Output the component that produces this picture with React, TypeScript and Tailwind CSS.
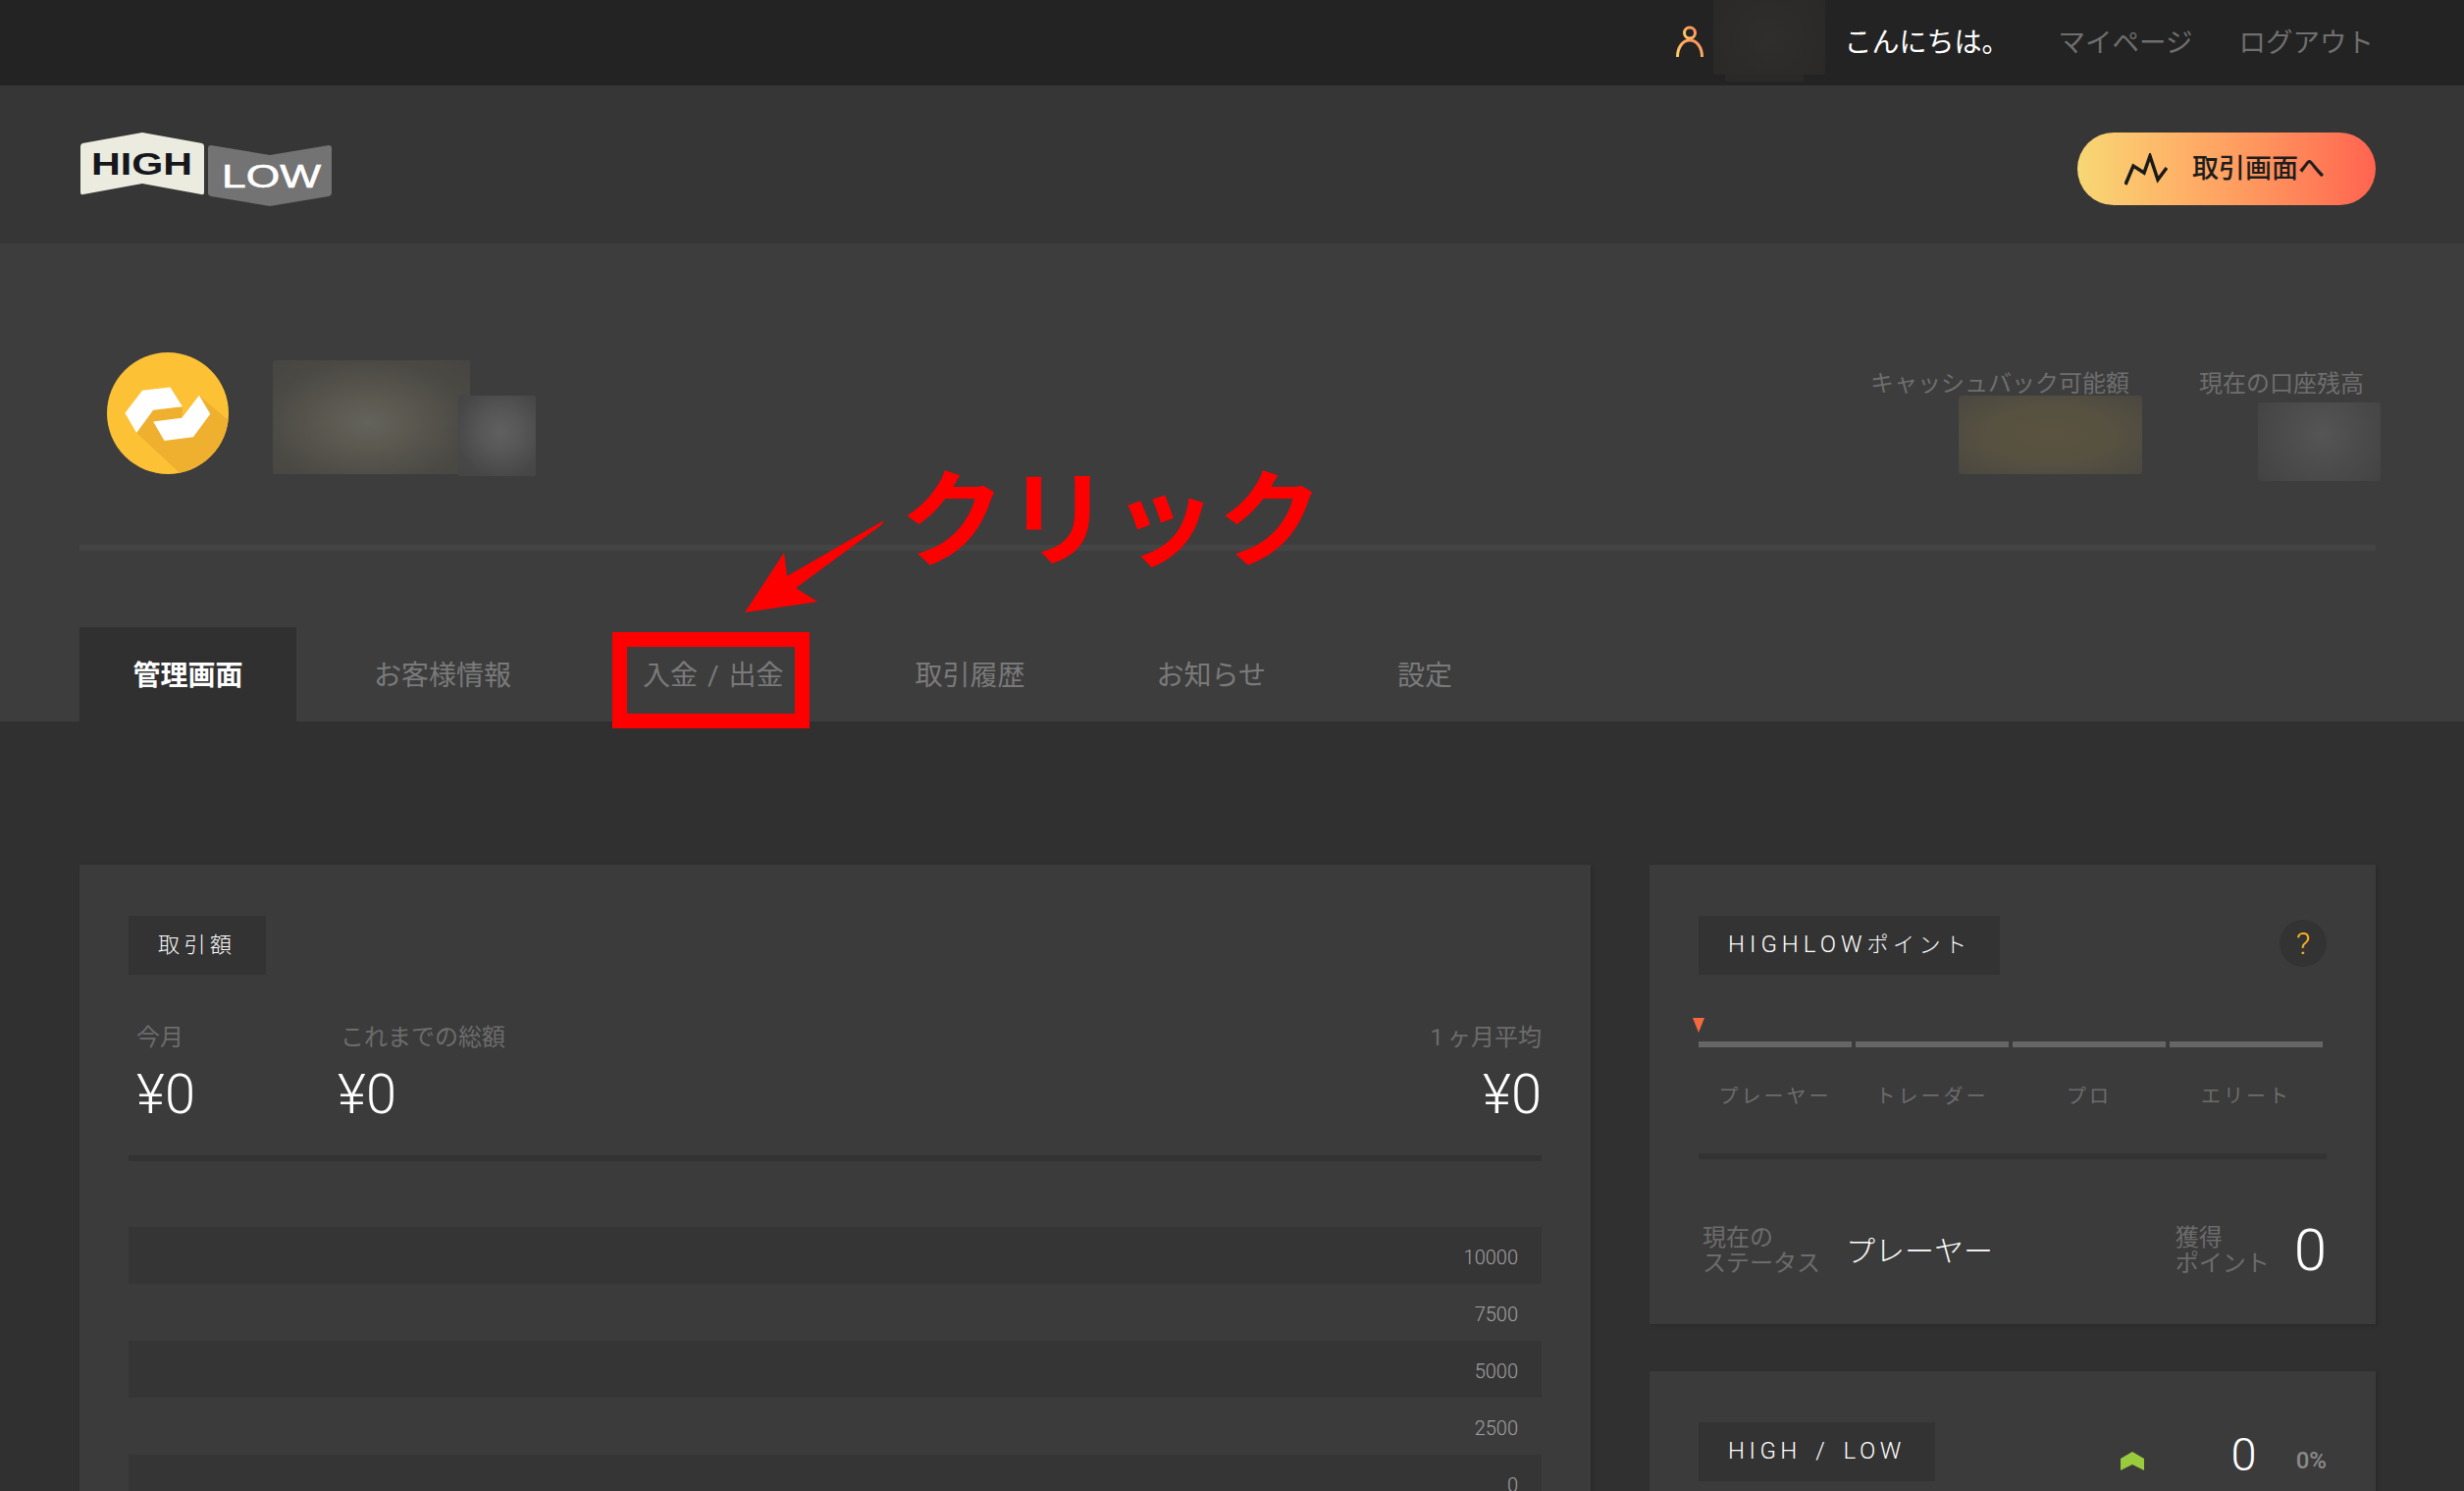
import React from "react";

const tabs = ["お客様情報", "入金 / 出金", "取引履歴", "お知らせ", "設定"];
const ranks = ["プレーヤー", "トレーダー", "プロ", "エリート"];
const chartRows = [
  { label: "10000", dark: true },
  { label: "7500", dark: false },
  { label: "5000", dark: true },
  { label: "2500", dark: false },
  { label: "0", dark: true },
];

function Logo() {
  return (
    <svg width="256" height="75" viewBox="82 135 256 75">
      <path d="M84 146 L145 135 L206 146 Q208 147 208 149 L208 196 Q208 199 205 198 L145 187 L85 198 Q82 199 82 196 L82 149 Q82 147 84 146 Z" fill="#ebebe0" />
      <path d="M215 148 L275 158 L335 148 Q338 148 338 151 L338 197 Q338 199 335 200 L275 210 L215 200 Q212 199 212 197 L212 151 Q212 148 215 148 Z" fill="#737373" />
      <text x="93" y="178" fontFamily="'Liberation Sans', sans-serif" fontWeight="700" fontSize="32" fill="#16171c" textLength="103" lengthAdjust="spacingAndGlyphs">HIGH</text>
      <text x="226" y="191" fontFamily="'Liberation Sans', sans-serif" fontWeight="400" fontSize="33" stroke="#ffffff" strokeWidth="0.6" fill="#ffffff" textLength="101" lengthAdjust="spacingAndGlyphs">LOW</text>
    </svg>
  );
}

function Coin() {
  return (
    <svg width="124" height="124" viewBox="57 57 371 371" className="shrink-0">
      <defs>
        <clipPath id="coin-clip">
          <circle cx="242.5" cy="242.5" r="185.5" />
        </clipPath>
      </defs>
      <circle cx="242.5" cy="242.5" r="185.5" fill="#fdc136" />
      <path d="M250 163 L287 222 L198 233 L147 302 L290 435 L440 435 L440 275 L338 188 L285 257 L287 222 Z" fill="#eeb02e" clipPath="url(#coin-clip)" />
      <path d="M165 173 L250 163 L287 222 L198 233 L147 302 L112 242 Z" fill="#ffffff" />
      <path d="M198 268 L285 257 L338 188 L372 245 L320 315 L232 326 Z" fill="#ffffff" />
    </svg>
  );
}

function Chip({ children }: { children: React.ReactNode }) {
  return (
    <div className="h-[60px] w-fit px-[30px] pb-[2px] bg-[#333333] text-white text-[22px] font-light tracking-[4.5px] flex items-center whitespace-nowrap">
      {children}
    </div>
  );
}

export default function App() {
  return (
    <div className="relative h-[1519px] overflow-hidden bg-[#303030] font-['Roboto','Noto_Sans_CJK_JP',sans-serif]">
      {/* top bar */}
      <div className="h-[87px] bg-[#232323] flex justify-end items-center pr-[92px] text-[28px]">
        <svg width="28" height="32" viewBox="0 0 28 32" className="mr-[10px] mb-[4px]">
          <defs>
            <linearGradient id="user-grad" x1="0" y1="1" x2="1" y2="0">
              <stop offset="0" stopColor="#fbd36a" />
              <stop offset="1" stopColor="#ff8a5a" />
            </linearGradient>
          </defs>
          <circle cx="14" cy="7.5" r="5.5" fill="none" stroke="url(#user-grad)" strokeWidth="3" />
          <path d="M1.5 32 C1.5 22 7 15 14 15 C21 15 26.5 22 26.5 32" fill="none" stroke="url(#user-grad)" strokeWidth="3" />
        </svg>
        <div className="relative self-start w-[114px] h-[76px] rounded-b-[3px] bg-[radial-gradient(circle_at_50%_50%,#302e2d_0%,#2b2928_100%)] mr-[20px]">
          <div className="absolute left-[12px] top-[76px] w-[80px] h-[7px] bg-[#2a2928]" />
        </div>
        <span className="text-white mr-[50px]">こんにちは。</span>
        <span className="text-[27.5px] text-[#6f6f6f] mr-[47px]">マイページ</span>
        <span className="text-[27.5px] text-[#6f6f6f]">ログアウト</span>
      </div>

      {/* logo row */}
      <div className="h-[161px] bg-[#363636] flex justify-between items-start pt-[48px] pl-[82px] pr-[90px]">
        <Logo />
        <div className="w-[304px] h-[74px] rounded-full bg-gradient-to-r from-[#f7d774] to-[#ff6350] flex items-center pl-[48px] text-[27px] font-medium text-[#1d1d1d]">
          <svg width="44" height="33" viewBox="0 0 44 33" className="mr-[25px]">
            <path d="M1 32 L9 13 L20 20 L26 3 L34 27 L43 15" fill="none" stroke="#1a1a1a" strokeWidth="3.5" />
          </svg>
          <span>取引画面へ</span>
        </div>
      </div>

      {/* profile */}
      <div className="h-[487px] bg-[#3d3d3d] pl-[81px] pr-[90px] pt-[111px] flex flex-col">
        <div className="h-[124px] flex">
          <div className="ml-[28px]">
            <Coin />
          </div>
          <div className="relative ml-[45px] mt-[8px] w-[201px] h-[116px] rounded-[2px] bg-[radial-gradient(ellipse_at_48%_55%,#64635b_0%,#5a584f_30%,#4a4944_70%,#464541_100%)]">
            <div className="absolute left-[189px] top-[36px] w-[79px] h-[82px] rounded-[2px] bg-[radial-gradient(circle_at_55%_45%,#606060_0%,#565656_35%,#474747_75%,#444444_100%)]" />
          </div>
          <div className="ml-auto flex gap-[71px] pr-[12px] mt-[19px]">
            <div className="relative text-[24px] leading-[26px] text-[#6e6e6e] whitespace-nowrap">
              キャッシュバック可能額
              <div className="absolute left-[90px] top-[25px] w-[187px] h-[80px] rounded-[3px] bg-[radial-gradient(ellipse_at_50%_50%,#59533f_0%,#565140_50%,#4a4741_100%)]" />
            </div>
            <div className="relative text-[24px] leading-[26px] text-[#6e6e6e] whitespace-nowrap">
              現在の口座残高
              <div className="absolute left-[60px] top-[32px] w-[125px] h-[80px] rounded-[3px] bg-[radial-gradient(circle_at_52%_40%,#555555_0%,#4c4c4c_45%,#424242_100%)]" />
            </div>
          </div>
        </div>
        <div className="mt-[72px] h-[6px] shrink-0 bg-[#444444]" />
        <div className="mt-[78px] h-[96px] shrink-0 flex gap-[24px] text-[28px]">
          <div className="w-[221px] pt-[3px] bg-[#303030] text-white font-bold flex items-center justify-center">管理画面</div>
          {tabs.map((t) => (
            <div key={t} className="px-[55px] pt-[3px] text-[#7a7a7a] flex items-center whitespace-nowrap [word-spacing:3px]">
              {t}
            </div>
          ))}
        </div>
      </div>

      {/* main */}
      <div className="pt-[146px] pl-[81px] pr-[90px] grid grid-cols-[1540px_740px] gap-x-[60px] items-start">
        <div className="bg-[#3b3b3b] h-[800px] px-[50px] pt-[52px] shadow-[2px_2px_4px_rgba(0,0,0,0.15)]">
          <Chip>取引額</Chip>
          <div className="mt-[50px] flex text-[24px] leading-[28px] text-[#6c6c6c]">
            <div className="w-[214px] pl-[8px]">
              <div>今月</div>
              <div className="mt-[12px] text-[56px] leading-[64px] text-white font-light">¥0</div>
            </div>
            <div className="pl-[2px]">
              <div>これまでの総額</div>
              <div className="mt-[12px] ml-[-3px] text-[56px] leading-[64px] text-white font-light">¥0</div>
            </div>
            <div className="ml-auto text-right">
              <div>
                <span className="mr-[4px]">1</span>ヶ月平均
              </div>
              <div className="mt-[12px] text-[56px] leading-[64px] text-white font-light">¥0</div>
            </div>
          </div>
          <div className="mt-[30px] h-[6px] bg-[#333333]" />
          <div className="mt-[67px] flex flex-col">
            {chartRows.map((r) => (
              <div
                key={r.label}
                className={`h-[58px] pt-[3px] flex items-center justify-end pr-[24px] text-[20px] font-light text-[#a0a0a0] ${r.dark ? "bg-[#353535]" : ""}`}
              >
                {r.label}
              </div>
            ))}
          </div>
        </div>

        <div className="flex flex-col gap-[48px]">
          <div className="bg-[#3b3b3b] h-[468px] px-[50px] pt-[52px] shadow-[2px_2px_4px_rgba(0,0,0,0.15)]">
            <div className="flex justify-between items-start">
              <Chip>
                <span className="text-[24px] tracking-[5px]">HIGHLOW</span>ポイント
              </Chip>
              <div className="mt-[4px] w-[48px] h-[48px] rounded-full bg-[#333333] text-[#ffb81f] text-[32px] font-light flex items-center justify-center">
                ?
              </div>
            </div>
            <div className="mt-[44px] ml-[-6px] w-0 h-0 border-l-[6px] border-r-[6px] border-t-[15px] border-l-transparent border-r-transparent border-t-[#f26a3d]" />
            <div className="mt-[9px] flex gap-[4px] w-[636px]">
              {ranks.map((r) => (
                <div key={r} className="w-[156px]">
                  <div className="h-[6px] bg-[#666666]" />
                  <div className="mt-[36px] text-center text-[20px] leading-[28px] tracking-[3px] text-[#6c6c6c]">{r}</div>
                </div>
              ))}
            </div>
            <div className="mt-[44px] h-[6px] bg-[#333333]" />
            <div className="mt-[63px] flex items-center">
              <div className="pl-[4px] w-[150px] text-[24px] leading-[26px] text-[#6c6c6c]">
                現在の
                <br />
                ステータス
              </div>
              <div className="text-[30px] font-light text-white">プレーヤー</div>
              <div className="ml-auto text-[24px] leading-[26px] text-[#6c6c6c]">
                獲得
                <br />
                ポイント
              </div>
              <div className="ml-[25px] text-[60px] leading-[60px] font-light text-white">0</div>
            </div>
          </div>

          <div className="bg-[#3b3b3b] h-[300px] px-[50px] pt-[52px] shadow-[2px_2px_4px_rgba(0,0,0,0.15)]">
            <div className="flex items-start">
              <Chip>
                <span className="text-[24px] [word-spacing:4px]">HIGH / LOW</span>
              </Chip>
              <svg width="24" height="19" viewBox="0 0 24 19" className="ml-auto mt-[30px]">
                <path d="M0 7 L12 0 L24 7 L24 19 L12 13 L0 19 Z" fill="#9acb3c" />
              </svg>
              <div className="ml-[89px] mt-[3px] text-[47px] leading-[60px] font-light text-white">0</div>
              <div className="ml-[40px] mt-[25px] text-[24px] leading-[28px] font-medium text-[#8a8a8a]">0%</div>
            </div>
          </div>
        </div>
      </div>

      {/* red annotation over the page */}
      <div className="absolute left-[624px] top-[644px] w-[201px] h-[98px] border-[15px] border-[#ff0000]" />
      <svg width="160" height="110" viewBox="750 525 160 110" className="absolute left-[750px] top-[525px]">
        <path d="M901 530 L802 587 L799 563 L759 624 L833 613 L811 599 L898 535 Z" fill="#ff0000" />
      </svg>
      <div className="absolute left-[917px] top-[467px] text-[107px] leading-[130px] font-semibold tracking-[1px] text-[#ff0000] whitespace-nowrap">
        クリック
      </div>
    </div>
  );
}
